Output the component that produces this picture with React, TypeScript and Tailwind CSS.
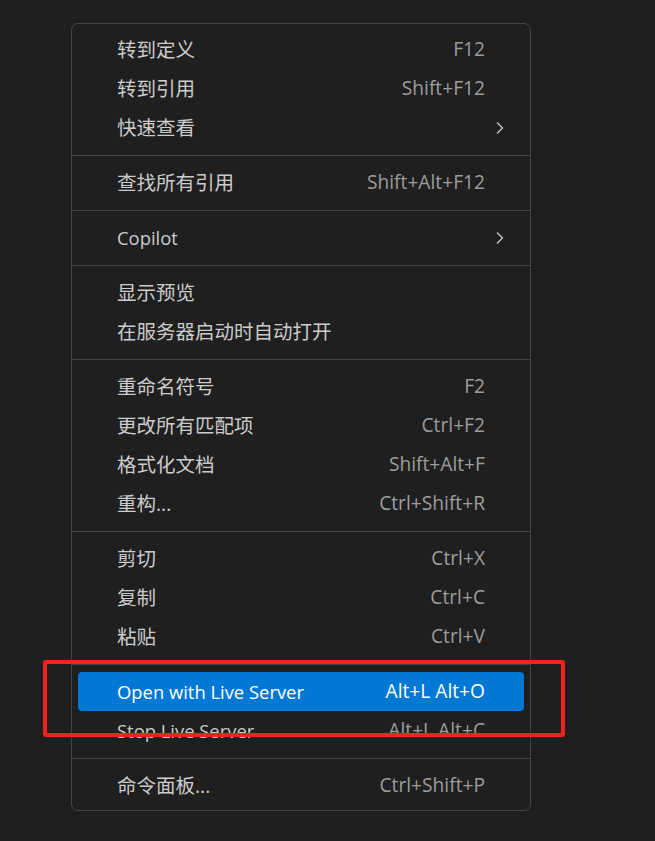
import React from "react";

type Item = { label: string; shortcut?: string; sub?: boolean; active?: boolean };
type Group = Item[];

const groups: Group[] = [
  [
    { label: "转到定义", shortcut: "F12" },
    { label: "转到引用", shortcut: "Shift+F12" },
    { label: "快速查看", sub: true },
  ],
  [{ label: "查找所有引用", shortcut: "Shift+Alt+F12" }],
  [{ label: "Copilot", sub: true }],
  [{ label: "显示预览" }, { label: "在服务器启动时自动打开" }],
  [
    { label: "重命名符号", shortcut: "F2" },
    { label: "更改所有匹配项", shortcut: "Ctrl+F2" },
    { label: "格式化文档", shortcut: "Shift+Alt+F" },
    { label: "重构...", shortcut: "Ctrl+Shift+R" },
  ],
  [
    { label: "剪切", shortcut: "Ctrl+X" },
    { label: "复制", shortcut: "Ctrl+C" },
    { label: "粘贴", shortcut: "Ctrl+V" },
  ],
  [
    { label: "Open with Live Server", shortcut: "Alt+L Alt+O", active: true },
    { label: "Stop Live Server", shortcut: "Alt+L Alt+C" },
  ],
  [{ label: "命令面板...", shortcut: "Ctrl+Shift+P" }],
];

function Chevron() {
  return (
    <svg width="10" height="14" viewBox="0 0 10 14" fill="none">
      <path d="M2 1.5 L7.5 7 L2 12.5" stroke="#c8c8c8" strokeWidth="1.3" />
    </svg>
  );
}

const isCjk = (s: string) => /[\u4e00-\u9fff]/.test(s);

function Row({ item }: { item: Item }) {
  return (
    <div
      className={
        "mx-[6px] flex h-[39px] items-center rounded-[4px] pl-[39px] pr-[39px] " +
        (item.active ? "bg-[#0078d4] text-white" : "text-[#cccccc]")
      }
    >
      <span
        className={
          "flex-1 whitespace-nowrap " + (isCjk(item.label) ? "text-[19.5px]" : "text-[18.4px]")
        }
      >
        {item.label}
      </span>
      {item.shortcut && (
        <span
          className={
            "whitespace-nowrap text-[19.2px] " + (item.active ? "text-white" : "text-[#9d9d9d]")
          }
        >
          {item.shortcut}
        </span>
      )}
      {item.sub && (
        <span className="-mr-[20px] flex items-center">
          <Chevron />
        </span>
      )}
    </div>
  );
}

export default function App() {
  return (
    <div
      className="relative h-[841px] w-[655px] overflow-hidden bg-[#1f1f1f] pl-[71px] pt-[23px] text-[18px]"
      style={{ fontFamily: '"Open Sans", "Noto Sans CJK SC", sans-serif' }}
    >
      <div className="w-[460px] rounded-[7px] border border-[#454545] bg-[#1f1f1f] pb-[5px] pt-[6px]">
        {groups.map((g, gi) => (
          <div key={gi}>
            {gi > 0 && (
              <div className="py-[7.5px]">
                <div className="h-px bg-[#454545]" />
              </div>
            )}
            {g.map((it, ii) => (
              <Row key={ii} item={it} />
            ))}
          </div>
        ))}
      </div>
      <div className="absolute left-[43px] top-[660px] h-[77px] w-[522px] rounded-[3px] border-[4px] border-[#f5221b]" />
    </div>
  );
}
